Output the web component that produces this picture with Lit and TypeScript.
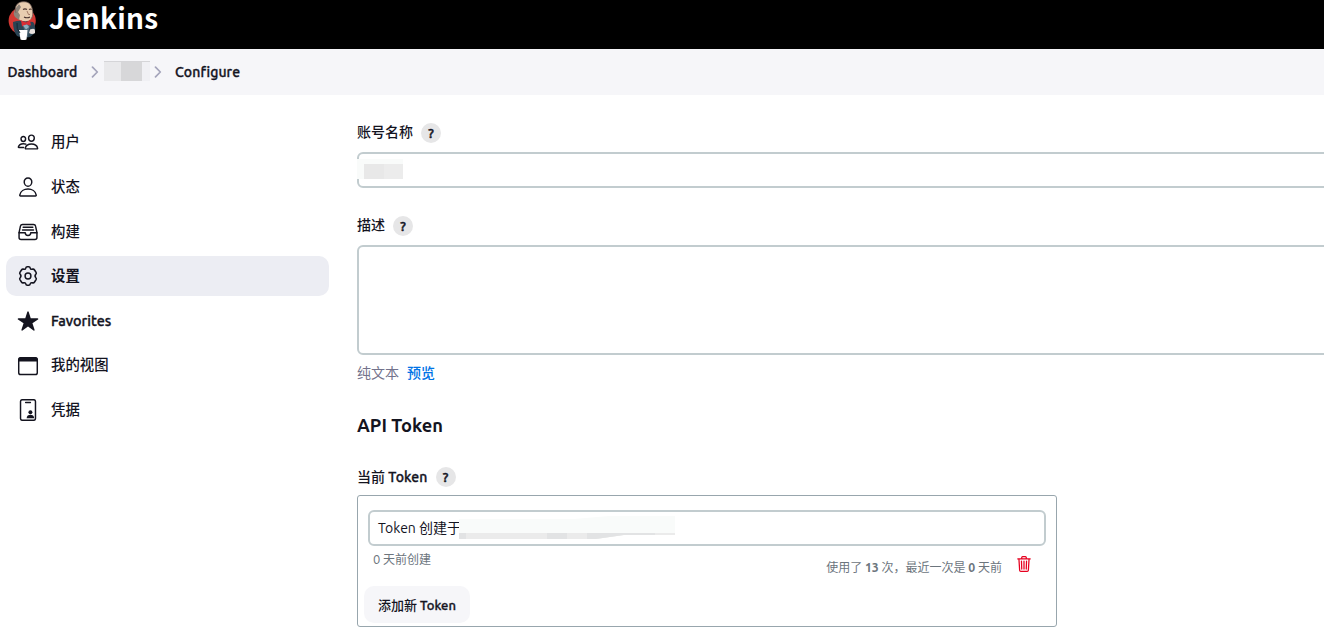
import { LitElement, html, css, svg } from "lit";
import { customElement } from "lit/decorators.js";
import { classMap } from "lit/directives/class-map.js";

const icon = (body: unknown) =>
  html`<svg class="icon" viewBox="0 0 512 512" fill="none" stroke="currentColor" stroke-width="34" stroke-linecap="round" stroke-linejoin="round">${body}</svg>`;

const people = svg`<path d="M402 168c-2.93 40.67-33.1 72-66 72s-63.12-31.32-66-72c-3-42.31 26.37-72 66-72s69 30.46 66 72z"/><path d="M336 304c-65.17 0-127.84 32.37-143.54 95.41-2.08 8.34 3.15 16.59 11.72 16.59h263.65c8.57 0 13.77-8.25 11.72-16.59C463.85 335.36 401.18 304 336 304z"/><path d="M200 185.94c-2.34 32.48-26.72 58.06-53 58.06s-50.7-25.57-53-58.06C91.61 152.15 115.34 128 147 128s55.39 24.77 53 57.94z"/><path d="M206 306c-18.05-8.27-37.93-11.45-59-11.45-52 0-102.1 25.85-114.65 76.2-1.65 6.66 2.53 13.25 9.37 13.25H154"/>`;
const person = svg`<path d="M344 144c-3.92 52.87-44 96-88 96s-84.15-43.12-88-96c-4-55 35-96 88-96s92 42 88 96z"/><path d="M256 304c-87 0-175.3 48-191.64 138.6C62.39 453.52 68.57 464 80 464h352c11.44 0 17.62-10.48 15.65-21.4C431.3 352 343 304 256 304z"/>`;
const tray = svg`<path d="M384 80H128c-26 0-43 14-48 40L48 272v112a48.14 48.14 0 0048 48h320a48.14 48.14 0 0048-48V272l-32-152c-5-27-23-40-48-40z"/><path d="M48 272h144M320 272h144M192 272a64 64 0 00128 0M144 144h224M128 208h256"/>`;
const gear = svg`<circle cx="256" cy="256" r="68"/><path d="M204 72Q210 42 238 42H274Q302 42 308 72Q314 104 344 100L370 96Q394 94 408 116L444 172Q458 196 438 216Q402 256 438 296Q458 316 444 340L408 396Q394 418 370 416L344 412Q314 408 308 440Q302 470 274 470H238Q210 470 204 440Q198 408 168 412L142 416Q118 418 104 396L68 340Q54 316 74 296Q110 256 74 216Q54 196 68 172L104 116Q118 94 142 96L168 100Q198 104 204 72Z" stroke-width="36"/>`;
const star = svg`<path stroke="none" fill="currentColor" d="M394 480a16 16 0 01-9.39-3L256 383.76 127.39 477a16 16 0 01-24.55-18.08L153 310.35 23 221.2a16 16 0 019-29.2h160.38l48.4-148.95a16 16 0 0130.44 0l48.4 149H480a16 16 0 019.05 29.2L359 310.35l50.13 148.53A16 16 0 01394 480z"/>`;
const windowIcon = svg`<rect x="40" y="64" width="432" height="390" rx="42"/><path fill="currentColor" stroke="none" d="M30 150V104Q36 54 90 52H422Q476 54 482 104V150Z"/>`;
const badge = svg`<rect x="82" y="16" width="348" height="480" rx="44"/><path d="M200 80h112" stroke-width="32"/><circle cx="312" cy="308" r="46" fill="currentColor" stroke="none"/><path fill="currentColor" stroke="none" d="M224 446C224 390 266 366 312 366S400 390 400 446Z"/>`;
const trash = html`<svg class="trash" viewBox="0 0 512 512" fill="none" stroke="currentColor" stroke-width="36" stroke-linecap="round" stroke-linejoin="round"><path d="M112 112l20 320c.95 18.49 14.4 32 32 32h184c17.67 0 30.87-13.51 32-32l20-320M80 112h352M192 112V72a23.93 23.93 0 0124-24h80a23.93 23.93 0 0124 24v40M256 176v224M184 176l8 224M328 176l-8 224"/></svg>`;
const chevron = html`<svg class="chevron" viewBox="0 0 8 12" fill="none" stroke="#a4a4bb" stroke-width="1.7" stroke-linecap="round" stroke-linejoin="round"><path d="M1.5 1.2L6.3 6L1.5 10.8"/></svg>`;

const butler = html`<svg class="butler" viewBox="0 0 30 42">
  <circle cx="14.2" cy="20.8" r="13.6" fill="#d33833"/>
  <path d="M5 22Q11 20 14 21L25 22Q28 25 27 33L22 37Q15 39 9 36Q5 31 5 22Z" fill="#2b4454"/>
  <path d="M8 13C6 7 9 2 15 1.8Q22 1 24 8Q26 15 23 19Q19 23 12 20Q8 18 8 13Z" fill="#e8cdb0"/>
  <path d="M8 8Q4 13 7 17L11 20L12 15L10 12L13 7L11 4Z" fill="#8d8379"/>
  <path d="M8 13C6 7 9 2 15 1.8Q22 1 24 8Q26 15 23 19" fill="none" stroke="#735f58" stroke-width=".8"/>
  <path d="M15 9.5q2-1.3 4 0M21 9.5q1.5-1 2.5 0M16 17q3 1.6 6 0" fill="none" stroke="#4b3530" stroke-width="1.1"/>
  <path d="M19 11l1.5 3.5h1.5" fill="none" stroke="#9b705e" stroke-width=".9"/>
  <path d="M14 22L18 37H20L22 23Z" fill="#516979"/>
  <path d="M13 20.5l5 2 4-2 1 5-5-1-4 2Z" fill="#dc2d35"/>
  <path d="M15 25.5l4-1 2 2.5-3 2.5Z" fill="#8fafbf"/>
  <path d="M11 30h8.5l-1 9.5q-3 1.2-6 0Z" fill="#fff"/>
  <path d="M22 29.5q5-2 5 1v2.5q-3 2-6 0Z" fill="#e8e0dc"/>
  <path d="M9 23q-1 6 3 10" fill="none" stroke="#142631"/>
</svg>`;

const items = [
  { label: "用户", glyph: people, raised: true },
  { label: "状态", glyph: person },
  { label: "构建", glyph: tray },
  { label: "设置", glyph: gear, active: true, raised: true },
  { label: "Favorites", glyph: star, medium: true },
  { label: "我的视图", glyph: windowIcon, raised: true },
  { label: "凭据", glyph: badge, raised: true },
];

@customElement("app-root")
export class AppRoot extends LitElement {
  static styles = css`
    :host { display: block; height: 636px; overflow: hidden; background: #fff; color: #14141f;
      font: 500 14px/20px Ubuntu, "Noto Sans", "Noto Sans CJK SC", sans-serif; }
    * { box-sizing: border-box; }
    svg { display: block; flex: none; }
    .medium { -webkit-text-stroke: .35px currentColor; }
    .header { height: 49px; background: #000; display: flex; padding-left: 8px; }
    .butler { width: 30px; height: 42px; }
    .brand { color: #fff; font: 700 28px/34px "Noto Sans CJK SC", sans-serif; margin-left: 11px; letter-spacing: .3px; }
    .crumbs { height: 46px; background: #f6f6f9; display: flex; align-items: center; padding-left: 7.5px; }
    .dash { width: 83.5px; letter-spacing: .05px; }
    .chevron { width: 8px; height: 12px; }
    .mask { width: 46px; height: 20px; margin: -2px 4px 0 5px; border-top: 1px solid #d5d5d8;
      background: linear-gradient(90deg, #e9e9eb 17px, #d7d7d9 17px 38px, #f0f0f4 38px); }
    .conf { margin-left: 13px; letter-spacing: .12px; }
    .body { display: flex; }
    .side { width: 329px; padding: 27.15px 0 0 6px; display: flex; flex-direction: column; gap: 4.7px; flex: none; font-size: 14.4px; }
    .item { height: 40px; border-radius: 10px; display: flex; align-items: center; gap: 12px; padding-left: 11px; }
    .item.raised span { padding-bottom: 1px; }
    .item.active { background: #ecedf3; font-weight: 700; }
    .icon { width: 22px; height: 22px; }
    .main { flex: none; width: 1000px; padding: 28px 0 0 28px; }
    .label { display: flex; align-items: center; height: 20px; gap: 8px; }
    .lifted { padding-bottom: 2px; }
    .help { width: 20px; height: 20px; border-radius: 50%; background: #e6e6e7; text-align: center; font-size: 13.5px; -webkit-text-stroke: .5px currentColor; }
    .input { position: relative; border: 2px solid #c2cccf; border-radius: 6px; background: #fff; }
    .name { height: 36px; margin: 9px 0 28px; }
    .namemask { position: absolute; left: -2px; top: 5px; width: 46px; height: 20px; background: #f9fbfa; padding: 5px 0 0 7px; }
    .namefill { height: 15px; background: linear-gradient(90deg, #e8e8e8 20px, #ececec 20px); }
    .desc { height: 110px; margin-top: 9px; }
    .preview { display: flex; gap: 8px; margin-top: 8px; font-weight: 400; color: #73738c; }
    .link { color: #0073e6; font-weight: 500; }
    .title { margin: 28px 0 0; font-size: 18.3px; line-height: 28px; font-weight: 700; }
    .current { margin-top: 28px; }
    .current .medium { letter-spacing: .15px; }
    .tokens { width: 700px; height: 132px; margin-top: 8px; border: 1px solid #98a6ad; border-radius: 3px; padding: 14px 10px 0; }
    .token { height: 36px; padding: 6px 8px; font-weight: 400; }
    .smear { position: absolute; left: 89px; top: 3px; width: 216px; height: 26px; }
    .meta { display: flex; justify-content: space-between; height: 40px; font-size: 12px; color: #6c757d; font-weight: 400; padding: 0 13px 0 5px; }
    .age { padding-top: 3px; }
    .zero { font-size: 13px; }
    .usage { display: flex; gap: 13px; padding-top: 12px; }
    .usage b { font-size: 12.3px; }
    .trash { width: 18px; height: 18px; color: #e6001f; margin-top: -3px; }
    .add { display: block; width: 106px; height: 37px; margin-left: -4px; border: 0; border-radius: 10px; background: #f6f6f9; color: inherit; font: inherit; font-size: 13px; padding: 0; }
  `;

  private label(text: unknown, extra = "") {
    return html`<div class="label"><span class=${extra}>${text}</span><span class="help">?</span></div>`;
  }

  render() {
    return html`
      <header class="header">${butler}<span class="brand">Jenkins</span></header>
      <nav class="crumbs"><span class="dash medium">Dashboard</span>${chevron}<span class="mask"></span>${chevron}<span class="conf medium">Configure</span></nav>
      <div class="body">
        <aside class="side">
          ${items.map((i) => html`<div class=${classMap({ item: true, active: !!i.active, raised: !!i.raised })}>${icon(i.glyph)}<span class=${classMap({ medium: !!i.medium })}>${i.label}</span></div>`)}
        </aside>
        <main class="main">
          ${this.label("账号名称", "lifted")}
          <div class="input name"><div class="namemask"><div class="namefill"></div></div></div>
          ${this.label("描述", "lifted")}
          <div class="input desc"></div>
          <div class="preview"><span>纯文本</span><span class="link">预览</span></div>
          <h2 class="title">API Token</h2>
          <div class="current">${this.label(html`当前 <span class="medium">Token</span>`)}</div>
          <section class="tokens">
            <div class="input token">Token 创建于
              <svg class="smear" viewBox="0 0 216 26" preserveAspectRatio="none"><path d="M0 4H115L150 1H216V20H0Z" fill="#f9fbfa"/><path d="M0 18H216V20H165L137 24H0Z" fill="#ebebeb"/><path d="M0 18H7V24H0ZM88 18H108V24H88ZM128 18H196V20H165L137 24H128Z" fill="#e2e3e4"/></svg>
            </div>
            <div class="meta"><span class="age"><span class="zero">0</span> 天前创建</span><div class="usage"><span>使用了 <b>13</b> 次，最近一次是 <b>0</b> 天前</span>${trash}</div></div>
            <button class="add">添加新 <span class="medium">Token</span></button>
          </section>
        </main>
      </div>`;
  }
}
